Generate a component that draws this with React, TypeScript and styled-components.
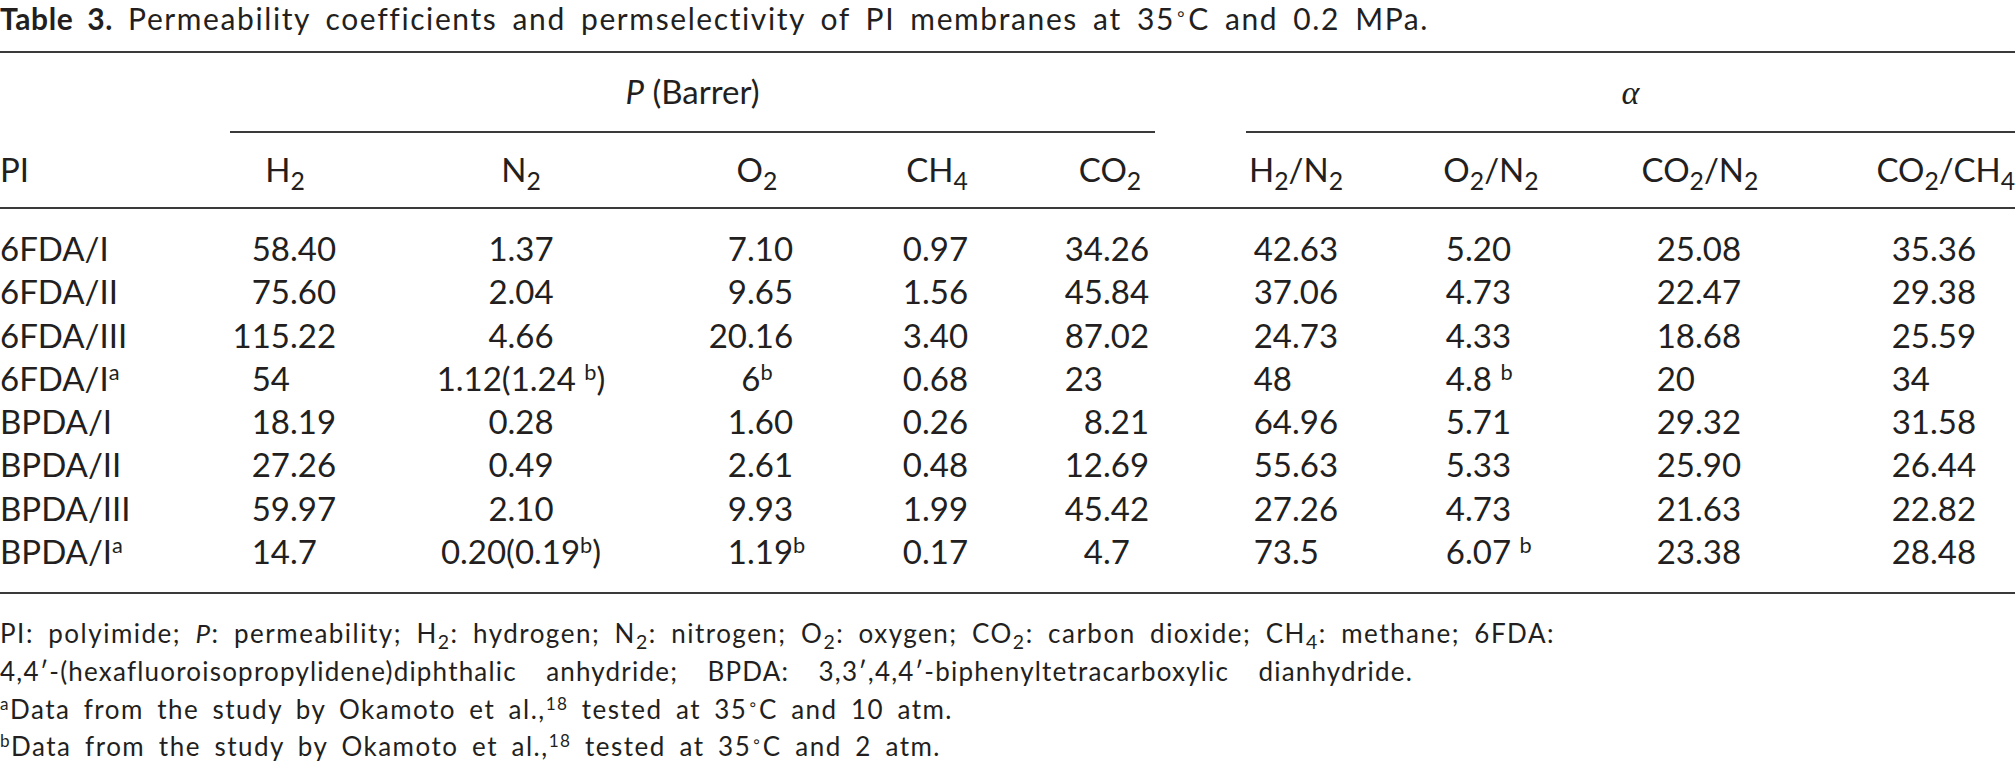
import React from 'react';
import styled, {createGlobalStyle} from 'styled-components';

const INK = '#231f20';
const RULE = '#3a3a3a';

// column tracks: PI | H2 | N2 | O2 | CH4 | CO2 | H2/N2 | O2/N2 | CO2/N2 | CO2/CH4
const COLS = '167px 236px 236px 236px 124px 222px 150px 240px 178px 226px';

const GlobalStyle = createGlobalStyle`
  html, body {
    margin: 0;
    padding: 0;
    background: #fff;
  }
  body {
    font-family: Lato, "Open Sans", "DejaVu Sans", sans-serif;
    color: ${INK};
    -webkit-font-smoothing: antialiased;
  }
`;

const Page = styled.div`
  width: 2015px;
  height: 766px;
  overflow: hidden;
`;

// prose lines are set to the measure of the reference, spread like typeset text
const Line = styled.div<{$width: number; $track?: number}>`
  width: ${p => p.$width}px;
  text-align: justify;
  text-align-last: justify;
  ${p => (p.$track ? `letter-spacing: ${p.$track}px;` : '')}
`;

const Caption = styled(Line)`
  font-size: 30px;
  line-height: 36px;
  letter-spacing: 1.6px;
`;

const CaptionLabel = styled.span`
  font-weight: 700;
  letter-spacing: 0.6px;
`;

const Table = styled.div`
  margin-top: 15px;
  border-top: 2px solid ${RULE};
  border-bottom: 2px solid ${RULE};
  font-size: 33px;
`;

const GroupRow = styled.div`
  display: grid;
  grid-template-columns: ${COLS};
  line-height: 40px;
`;

const Group = styled.div<{$from: number; $to: number; $ml: number; $mr: number}>`
  grid-column: ${p => p.$from} / ${p => p.$to};
  margin: 0 ${p => p.$mr}px 0 ${p => p.$ml}px;
  padding: 18px 0;
  text-align: center;
  border-bottom: 2px solid ${RULE};
`;

const Alpha = styled.span`
  font-family: "Liberation Serif", "DejaVu Serif", serif;
  font-style: italic;
  font-size: 34px;
`;

const HeadRow = styled.div`
  display: grid;
  grid-template-columns: ${COLS};
  line-height: 40px;
  padding: 16px 0 18px;
  border-bottom: 2px solid ${RULE};
`;

const Head = styled.div<{$align?: 'left' | 'center' | 'right'}>`
  text-align: ${p => p.$align || 'center'};
  white-space: nowrap;
`;

const Body = styled.div`
  padding: 18px 0 19px;
`;

const Row = styled.div`
  display: grid;
  grid-template-columns: ${COLS};
  height: 43.3px;
  line-height: 43.3px;
`;

const Label = styled.div`
  white-space: nowrap;
`;

const Center = styled.div`
  text-align: center;
  white-space: pre;
`;

const Dec = styled.div<{$int: number}>`
  display: grid;
  grid-template-columns: ${p => p.$int}px auto;
  white-space: pre;
`;

const Int = styled.span`
  text-align: right;
`;

const Frac = styled.span``;

const Sub = styled.sub`
  font-size: 0.75em;
  line-height: 0;
  vertical-align: -0.32em;
`;

const Sup = styled.sup`
  font-size: 0.66em;
  line-height: 0;
  vertical-align: 0.5em;
`;

const Deg = styled.sup`
  font-family: "DejaVu Sans", sans-serif;
  font-size: 0.62em;
  line-height: 0;
  vertical-align: 0.55em;
`;

const Notes = styled.div`
  margin-top: 21px;
  font-size: 26px;
  line-height: 37.7px;
  letter-spacing: 1.5px;
`;

type Align = 'label' | 'center' | number;

// number = width of the integer part, so decimal points line up
const ALIGN: Align[] = ['label', 123, 'center', 108, 47, 104, 71, 94, 84, 141];

const ROWS: {pi: string; v: string[]}[] = [
  {pi: '6FDA/I', v: ['58.40', '1.37', '7.10', '0.97', '34.26', '42.63', '5.20', '25.08', '35.36']},
  {pi: '6FDA/II', v: ['75.60', '2.04', '9.65', '1.56', '45.84', '37.06', '4.73', '22.47', '29.38']},
  {pi: '6FDA/III', v: ['115.22', '4.66', '20.16', '3.40', '87.02', '24.73', '4.33', '18.68', '25.59']},
  {pi: '6FDA/I^a', v: ['54', '1.12(1.24 ^b^)', '=6^b', '0.68', '23', '48', '4.8 ^b', '20', '34']},
  {pi: 'BPDA/I', v: ['18.19', '0.28', '1.60', '0.26', '8.21', '64.96', '5.71', '29.32', '31.58']},
  {pi: 'BPDA/II', v: ['27.26', '0.49', '2.61', '0.48', '12.69', '55.63', '5.33', '25.90', '26.44']},
  {pi: 'BPDA/III', v: ['59.97', '2.10', '9.93', '1.99', '45.42', '27.26', '4.73', '21.63', '22.82']},
  {pi: 'BPDA/I^a', v: ['14.7', '0.20(0.19^b^)', '1.19^b', '0.17', '4.7', '73.5', '6.07 ^b', '23.38', '28.48']}
];

// "^" toggles superscript
const rich = (s: string) =>
  s.split('^').map((part, i) => (i % 2 ? <Sup key={i}>{part}</Sup> : <React.Fragment key={i}>{part}</React.Fragment>));

const ValueCell: React.FC<{value: string; align: Align}> = ({value, align}) => {
  if (typeof align === 'number' && !value.startsWith('=')) {
    const dot = value.indexOf('.');
    const int = dot < 0 ? value.split('^')[0] : value.slice(0, dot);
    const rest = dot < 0 ? value.slice(int.length) : value.slice(dot);
    return (
      <Dec $int={align}>
        <Int>{int}</Int>
        <Frac>{rich(rest)}</Frac>
      </Dec>
    );
  }
  return <Center>{rich(value.replace(/^=/, ''))}</Center>;
};

const App: React.FC = () => (
  <Page>
    <GlobalStyle />
    <Caption $width={1429}>
      <CaptionLabel>Table 3.</CaptionLabel> Permeability coefficients and permselectivity of PI membranes at 35
      <Deg>∘</Deg>C and 0.2 MPa.
    </Caption>
    <Table>
      <GroupRow>
        <Group $from={2} $to={7} $ml={63} $mr={66}>
          <i>P</i> (Barrer)
        </Group>
        <Group $from={7} $to={11} $ml={25} $mr={0}>
          <Alpha>α</Alpha>
        </Group>
      </GroupRow>
      <HeadRow>
        <Head $align="left">PI</Head>
        <Head>
          H<Sub>2</Sub>
        </Head>
        <Head>
          N<Sub>2</Sub>
        </Head>
        <Head>
          O<Sub>2</Sub>
        </Head>
        <Head>
          CH<Sub>4</Sub>
        </Head>
        <Head>
          CO<Sub>2</Sub>
        </Head>
        <Head>
          H<Sub>2</Sub>/N<Sub>2</Sub>
        </Head>
        <Head>
          O<Sub>2</Sub>/N<Sub>2</Sub>
        </Head>
        <Head>
          CO<Sub>2</Sub>/N<Sub>2</Sub>
        </Head>
        <Head $align="right">
          CO<Sub>2</Sub>/CH<Sub>4</Sub>
        </Head>
      </HeadRow>
      <Body>
        {ROWS.map(row => (
          <Row key={row.pi}>
            <Label>{rich(row.pi)}</Label>
            {row.v.map((value, i) => (
              <ValueCell key={i} value={value} align={ALIGN[i + 1]} />
            ))}
          </Row>
        ))}
      </Body>
    </Table>
    <Notes>
      <Line $width={1555}>
        PI: polyimide; <i>P</i>: permeability; H<Sub>2</Sub>: hydrogen; N<Sub>2</Sub>: nitrogen; O<Sub>2</Sub>:
        oxygen; CO<Sub>2</Sub>: carbon dioxide; CH<Sub>4</Sub>: methane; 6FDA:
      </Line>
      <Line $width={1413} $track={1.2}>
        4,4′-(hexafluoroisopropylidene)diphthalic anhydride; BPDA: 3,3′,4,4′-biphenyltetracarboxylic dianhydride.
      </Line>
      <Line $width={953}>
        <Sup>a</Sup>Data from the study by Okamoto et al.,<Sup>18</Sup> tested at 35<Deg>∘</Deg>C and 10 atm.
      </Line>
      <Line $width={941}>
        <Sup>b</Sup>Data from the study by Okamoto et al.,<Sup>18</Sup> tested at 35<Deg>∘</Deg>C and 2 atm.
      </Line>
    </Notes>
  </Page>
);

export default App;
